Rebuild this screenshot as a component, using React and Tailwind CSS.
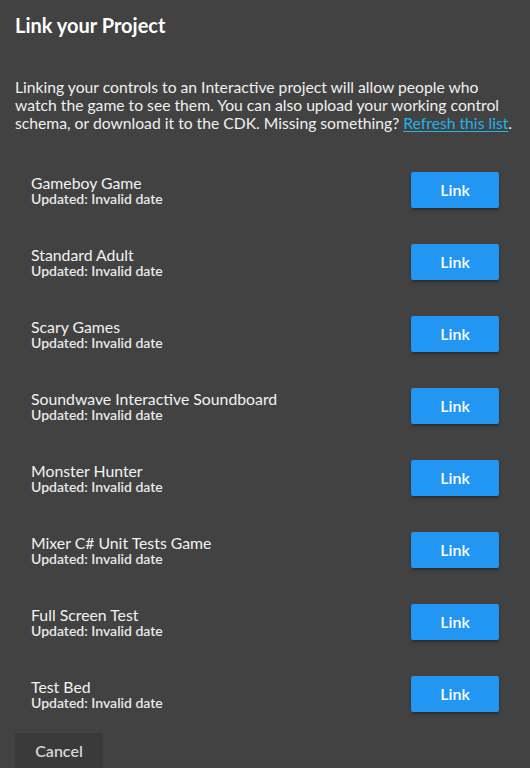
import React from "react";

const projects = [
  "Gameboy Game",
  "Standard Adult",
  "Scary Games",
  "Soundwave Interactive Soundboard",
  "Monster Hunter",
  "Mixer C# Unit Tests Game",
  "Full Screen Test",
  "Test Bed",
];

export default function App() {
  return (
    <div
      className="w-[530px] h-[768px] overflow-hidden bg-[#424242] text-[#ececec] px-[15px]"
      style={{ fontFamily: "Lato, 'Noto Sans', sans-serif" }}
    >
      <h1 className="pt-[13px] text-[20px] leading-[24px] font-bold text-white">Link your Project</h1>
      <p className="mt-[41px] mr-[-6px] text-[15.7px] leading-[18px] text-[#f0f0f0]">
        Linking your controls to an Interactive project will allow people who watch the game to see them. You can
        also upload your working control schema, or download it to the CDK. Missing something?{" "}
        <a className="text-[#1fb4ea] underline underline-offset-2">Refresh this list</a>.
      </p>
      <div className="mt-[22px] flex flex-col">
        {projects.map((p) => (
          <div key={p} className="h-[72px] flex items-center justify-between px-[16px]">
            <div className="flex flex-col">
              <span className="text-[15.8px] leading-[16px] text-[#f2f2f2]">{p}</span>
              <span className="text-[14px] leading-[15px] font-semibold text-[#e8e8e8]">Updated: Invalid date</span>
            </div>
            <button className="w-[88px] h-[36px] rounded-[2px] bg-[#2196f3] text-white text-[16px] font-semibold shadow-[0_2px_3px_rgba(0,0,0,0.35)]">
              Link
            </button>
          </div>
        ))}
      </div>
      <button className="mt-[3px] w-[88px] h-[36px] bg-[#3a3a3a] text-[#d6d6d6] text-[16px] font-semibold">
        Cancel
      </button>
    </div>
  );
}
